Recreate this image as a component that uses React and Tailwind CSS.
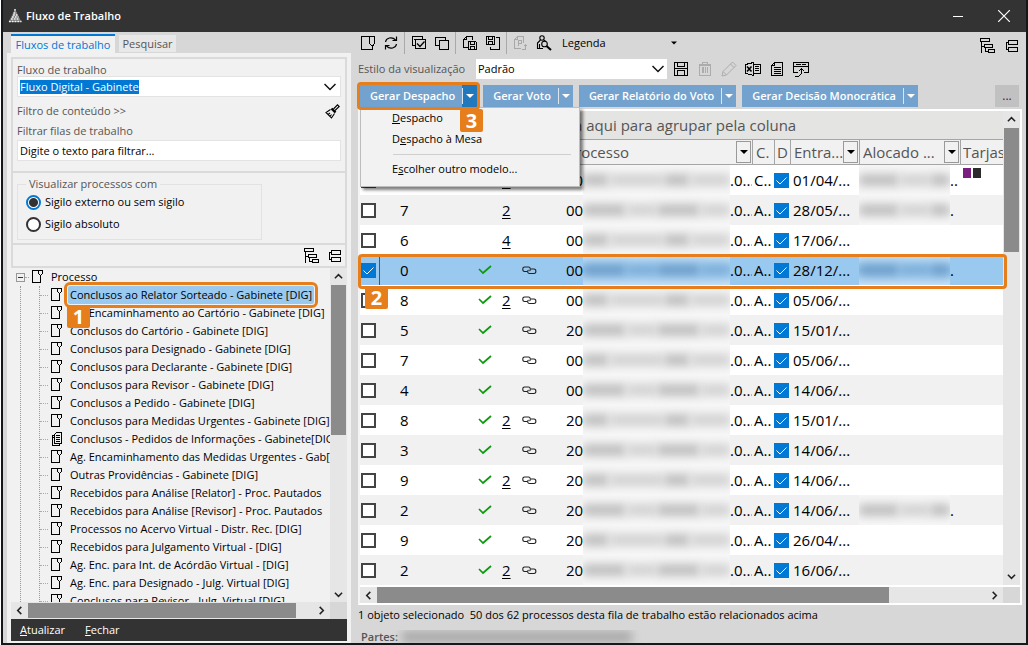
import React, { useState } from "react";
import clsx from "clsx";

const queues = [
  "Conclusos ao Relator Sorteado - Gabinete [DIG]",
  "Ag. Encaminhamento ao Cartório - Gabinete [DIG]",
  "Conclusos do Cartório - Gabinete [DIG]",
  "Conclusos para Designado - Gabinete [DIG]",
  "Conclusos para Declarante - Gabinete [DIG]",
  "Conclusos para Revisor - Gabinete [DIG]",
  "Conclusos a Pedido - Gabinete [DIG]",
  "Conclusos para Medidas Urgentes - Gabinete [DIG]",
  "Conclusos - Pedidos de Informações - Gabinete[DIG]",
  "Ag. Encaminhamento das Medidas Urgentes - Gab[DIG]",
  "Outras Providências - Gabinete [DIG]",
  "Recebidos para Análise [Relator] - Proc. Pautados",
  "Recebidos para Análise [Revisor] - Proc. Pautados",
  "Processos no Acervo Virtual - Distr. Rec. [DIG]",
  "Recebidos para Julgamento Virtual - [DIG]",
  "Ag. Enc. para Int. de Acórdão Virtual - [DIG]",
  "Ag. Enc. para Designado - Julg. Virtual [DIG]",
  "Conclusos para Revisor - Julg. Virtual [DIG]",
];

const processes = [
  { num: "", ok: false, count: "2", link: false, prefix: "00", cls: "C..", date: "01/04/...", owner: "..", tags: true },
  { num: "7", ok: false, count: "2", link: false, prefix: "00", cls: "A..", date: "28/05/...", owner: "." },
  { num: "6", ok: false, count: "4", link: false, prefix: "00", cls: "A..", date: "17/06/..." },
  { num: "0", ok: true, count: "", link: true, prefix: "00", cls: "A..", date: "28/12/...", owner: "." },
  { num: "8", ok: true, count: "2", link: true, prefix: "00", cls: "A..", date: "05/06/..." },
  { num: "5", ok: true, count: "", link: true, prefix: "20", cls: "A..", date: "15/01/..." },
  { num: "7", ok: true, count: "", link: true, prefix: "00", cls: "A..", date: "05/06/..." },
  { num: "4", ok: true, count: "", link: true, prefix: "00", cls: "A..", date: "14/06/..." },
  { num: "8", ok: true, count: "2", link: true, prefix: "20", cls: "A..", date: "15/01/..." },
  { num: "3", ok: true, count: "", link: true, prefix: "20", cls: "A..", date: "14/06/..." },
  { num: "9", ok: true, count: "2", link: true, prefix: "20", cls: "A..", date: "14/06/..." },
  { num: "2", ok: true, count: "", link: true, prefix: "20", cls: "A..", date: "14/06/...", owner: "." },
  { num: "9", ok: true, count: "", link: true, prefix: "20", cls: "A..", date: "26/04/..." },
  { num: "2", ok: true, count: "2", link: true, prefix: "20", cls: "A..", date: "16/06/..." },
];

// Base for the small line icons
const Icon = ({ children, className, w = 16, h = 16 }) => (
  <svg
    width={w}
    height={h}
    viewBox={`0 0 ${w} ${h}`}
    fill="none"
    stroke="currentColor"
    strokeWidth="1"
    shapeRendering="crispEdges"
    aria-hidden="true"
    className={clsx("shrink-0", className)}
  >
    {children}
  </svg>
);

const LogoIcon = () => (
  <svg width="14" height="14" viewBox="0 0 14 14" className="shrink-0" aria-hidden="true">
    <path d="M7 0 L13.5 13 H0.5 Z" fill="#777" />
    <path
      d="M7 0 V3 M5.5 4 H8.5 M5 6 H9.5 M4 8 H10.5 M3 10 H11.5 M1 12.5 H13.5"
      stroke="#f8f8f8"
      strokeWidth="1.4"
      fill="none"
      strokeDasharray="1.8 1"
    />
  </svg>
);

const PageIcon = () => (
  <Icon w={12} h={14}>
    <path d="M.5 .5 H10.5 V3.5 L8.5 5.5 V12.5 H.5 Z M6.5 .5 V3.5 L8.5 5.5" strokeWidth="1.2" />
  </Icon>
);

const ToolPageIcon = () => (
  <Icon>
    <path d="M1.5 1.5 H14.5 V8.5 L12.5 11 V14.5 H1.5 Z M9.5 1.5 V8.5 L12 11" />
  </Icon>
);

const RefreshIcon = () => (
  <svg width="16" height="16" viewBox="0 0 16 16" fill="none" stroke="currentColor" strokeWidth="1.2" className="shrink-0" aria-hidden="true">
    <path d="M2.5 7 C3 3 9 1 12.5 5 M13.5 1.5 V5.5 H9.5 M13.5 9 C13 13 7 15 3.5 11 M2.5 14.5 V10.5 H6.5" />
  </svg>
);

const CheckAllIcon = () => (
  <Icon>
    <path d="M4.5 10.5 H1.5 V1.5 H11.5 V4.5 M4.5 4.5 H14.5 V13.5 H4.5 Z M3.5 4.5 L4.5 5.5" />
    <path d="M6 8.5 L9 11.5 L13.5 6.5" strokeWidth="1.3" shapeRendering="auto" />
  </Icon>
);

const CopyIcon = () => (
  <Icon>
    <path d="M5.5 10.5 H1.5 V2.5 H11.5 V5.5 M5.5 5.5 H14.5 V14.5 H5.5 Z" />
  </Icon>
);

const PageSaveIcon = () => (
  <Icon>
    <path d="M6 12.5 H1.5 V4.5 L4.5 1.5 H10.5 V5 M1.5 4.5 H4.5 V1.5 M6.5 6.5 H13.5 L14.5 7.5 V14.5 H6.5 Z M8.5 6.5 V9.5 H12.5 V6.5 M8.5 14.5 V11.5 H12.5 V14.5" />
  </Icon>
);

const SavePageIcon = () => (
  <Icon>
    <path d="M1.5 1.5 H9.5 V9.5 H1.5 Z M3.5 1.5 V4.5 H7.5 V1.5 M3.5 9.5 V6.5 H7.5 V9.5 M11 2.5 H14.5 V14.5 H5.5 V11.5" />
  </Icon>
);

const PageExportIcon = () => (
  <Icon className="text-[#a8a8a8]">
    <path d="M8 13.5 H1.5 V4.5 L4.5 1.5 H10.5 V8 M1.5 4.5 H4.5 V1.5 M5.5 11 V5.5 H8.5 V8.5 H5.5 M9 14.5 H12.5 V9.5 M10.5 11.5 L12.5 9.5 L14.5 11.5" />
  </Icon>
);

const PersonSearchIcon = () => (
  <svg width="16" height="16" viewBox="0 0 16 16" fill="none" stroke="currentColor" strokeWidth="1.1" className="shrink-0" aria-hidden="true">
    <circle cx="6" cy="3" r="2.2" />
    <path d="M4.5 5 L1.5 8 V13.5 H7 M3.5 9 V13 M7.5 5 L10 6.5" />
    <circle cx="8.5" cy="9" r="2.8" />
    <path d="M10.5 11 L15 15" strokeWidth="2" />
  </svg>
);

const ExpandTreeIcon = () => (
  <Icon w={17} h={17}>
    <path d="M1.5 1.5 H10.5 V4.5 H1.5 Z M5.5 7.5 H13.5 V10.5 H5.5 Z M9.5 12.5 H15.5 V15.5 H9.5 Z M2.5 4.5 V15.5 M2.5 9.5 H5 M6.5 10.5 V14.5 H9" />
  </Icon>
);

const CollapseTreeIcon = () => (
  <Icon w={14} h={17}>
    <path d="M3.5 3.5 H12.5 V7.5 H3.5 Z M3.5 10.5 H12.5 V14.5 H3.5 Z M3 5.5 H1.5 V12.5 H3" />
  </Icon>
);

const SaveIcon = () => (
  <Icon>
    <path d="M1.5 1.5 H14.5 V14.5 H1.5 Z M4.5 1.5 V5.5 H11.5 V1.5 M4.5 14.5 V9.5 H11.5 V14.5 M2 7.5 H14" />
  </Icon>
);

const TrashIcon = () => (
  <Icon className="text-[#acacac]">
    <path d="M2.5 3.5 H13.5 V14.5 H2.5 Z M5.5 3 V1.5 H10.5 V3 M5.5 6 V12 M8 6 V12 M10.5 6 V12" />
    <path d="M2 4.5 H14 M6.5 6 V12" />
  </Icon>
);

const PencilIcon = () => (
  <Icon className="text-[#acacac]">
    <path d="M1 15 L2 10.5 L11.5 1 L15 4.5 L5.5 14 Z M2 10.5 L5.5 14 M9.5 3 L13 6.5" shapeRendering="auto" />
  </Icon>
);

const ExcelIcon = () => (
  <Icon>
    <path d="M.5 3.5 L8.5 1.5 V14.5 L.5 12.5 Z M9 3.5 H15.5 V12.5 H9 M10 5.5 H14 M10 7.5 H14 M10 9.5 H14" />
    <path d="M2 5.5 L6.5 10.5 M6.5 5.5 L2 10.5" strokeWidth="1.6" shapeRendering="auto" />
  </Icon>
);

const DocIcon = () => (
  <Icon>
    <path d="M5.5 1.5 H13.5 V14.5 H2.5 V4.5 Z M2.5 4.5 H5.5 V1.5 M5 6.5 H12 M5 8.5 H12 M5 10.5 H12 M5 12.5 H12" />
  </Icon>
);

const WindowImportIcon = () => (
  <Icon>
    <path d="M5 11.5 H.5 V1.5 H15.5 V11.5 H11 M3 3.5 H8 M9 3.5 H13 M1 5.5 H15 M2 15.5 H5.5 L8.5 12.5 V8 M6 10 L8.5 7.5 L11 10" />
  </Icon>
);

const BrushIcon = () => (
  <svg width="15" height="15" viewBox="0 0 15 15" fill="none" stroke="#000" strokeWidth="1.1" className="shrink-0" aria-hidden="true">
    <path d="M8.5 5 L12.5 .8 L14.2 2.5 L10 6.5" />
    <path d="M6.5 4.5 L10.5 8.5" strokeWidth="2.4" />
    <path d="M5.5 5.5 L1 8.5 L6.5 14 L9.5 9.5 M3 10.5 L5 9 M5 12.5 L6.5 10.5" />
  </svg>
);

const PagesIcon = () => (
  <Icon w={12} h={14}>
    <path d="M3.5 2.5 L5.5 .5 H10.5 V11.5 H3.5 Z M5 3.5 H9 M5 5.5 H9 M5 7.5 H9 M5 9.5 H9 M3 3.5 H1.5 V13.5 H8.5 V12 M1 5.5 H3" strokeWidth="1.2" />
  </Icon>
);

const LinkIcon = () => (
  <svg width="15" height="9" viewBox="0 0 15 9" fill="none" stroke="#222" strokeWidth="1.1" className="inline-block align-middle" aria-hidden="true">
    <path d="M5.5 5.5 H2.5 C.2 5.5 .2 1 2.5 1 H6.5 C8.5 1 9 4 7.5 5" />
    <path d="M9 3 H12 C14.5 3 14.5 7.5 12 7.5 H7.5 C5.5 7.5 5 5 6.5 4" />
  </svg>
);

const Chevron = ({ dir = "down", size = 9 }) => {
  const paths = {
    down: "M1 3 L5 7 L9 3",
    up: "M1 7 L5 3 L9 7",
    left: "M7 1 L3 5 L7 9",
    right: "M3 1 L7 5 L3 9",
  };
  return (
    <svg width={size} height={size} viewBox="0 0 10 10" fill="none" stroke="#222" strokeWidth="1.7" className="shrink-0" aria-hidden="true">
      <path d={paths[dir]} />
    </svg>
  );
};

const SelectChevron = () => (
  <svg width="12" height="8" viewBox="0 0 12 8" fill="none" stroke="#111" strokeWidth="1.5" className="pointer-events-none shrink-0" aria-hidden="true">
    <path d="M.5 1 L6 6.5 L11.5 1" />
  </svg>
);

const Caret = ({ className }) => (
  <svg width="8" height="4" viewBox="0 0 8 4" fill="currentColor" className={clsx("shrink-0", className)} aria-hidden="true">
    <path d="M0 0 H8 L4 4 Z" />
  </svg>
);

// Square check box with a thin white tick
const Tick = ({ label, checked, onChange }) => (
  <span className="relative block size-[15px]">
    <input
      type="checkbox"
      aria-label={label}
      checked={checked}
      onChange={onChange}
      className="block size-[15px] shrink-0 appearance-none border-2 border-[#444] bg-white checked:border-[#0078d4] checked:bg-[#0078d4]"
    />
    {checked && (
      <svg width="15" height="15" viewBox="0 0 15 15" fill="none" stroke="#fff" strokeWidth="1" className="pointer-events-none absolute inset-0" aria-hidden="true">
        <path d="M2.5 7.5 L6 11 L12.5 4.5" />
      </svg>
    )}
  </span>
);

const Badge = ({ n, className }) => (
  <span
    className={clsx(
      "pointer-events-none absolute z-30 flex size-[23px] items-center justify-center rounded-xs bg-[#e67e1b] text-xl leading-none font-bold text-white",
      className
    )}
  >
    {n}
  </span>
);

const IconButton = ({ label, children }) => (
  <button type="button" aria-label={label} className="flex shrink-0 items-center justify-center">
    {children}
  </button>
);

// Blurred-out personal data
const Redacted = ({ blocks, selected, className }) => (
  <span
    className={clsx(
      "flex h-[30px] items-center gap-px overflow-hidden bg-linear-to-b",
      selected
        ? "from-[#c4dff5] via-[#9ac9f0] to-[#c4dff5]"
        : "from-[#f7f7f7] via-[#f4f4f4] to-[#f7f7f7]",
      className
    )}
  >
    {blocks.map((b, i) => (
      <span
        key={i}
        style={{ flexGrow: b }}
        className={clsx(
          "h-3 blur-[5px]",
          selected
            ? i % 2 ? "bg-[#7fafd9]" : "bg-[#6f9fca]"
            : i % 2 ? "bg-[#d2d2d2]" : "bg-[#bfbfbf]"
        )}
      />
    ))}
  </span>
);

const SplitButton = ({ label, active, children }) => (
  <div className="relative flex h-[22px] shrink-0 items-stretch">
    <button type="button" className="bg-[#74a2ce] pr-[7px] pl-[10px] text-[11px] font-semibold text-white">
      {label}
    </button>
    <button
      type="button"
      aria-label={"Opções de " + label}
      className={clsx(
        "flex w-[15px] items-center text-white",
        active ? "bg-[#2278bd]" : "bg-[#74a2ce]"
      )}
    >
      <span className="mr-[3px] h-4 w-px bg-[#dce6ef]" />
      <Caret />
    </button>
    {children}
  </div>
);

const Sidebar = () => {
  const [secrecy, setSecrecy] = useState("externo");
  const radio =
    "size-[15px] shrink-0 appearance-none rounded-full border-2 border-[#333] bg-white checked:border-[#0078d4] checked:bg-[radial-gradient(circle,#333_0_4px,#fff_5px)]";

  return (
    <aside className="flex min-h-0 w-[344px] shrink-0 flex-col bg-[#f1f1f1]">
      {/* Tabs */}
      <div className="flex h-[21px] shrink-0 items-end gap-1 bg-[#d7d7d7] pl-1 text-[11px]">
        <button type="button" className="h-[19px] w-[104px] border-t-2 border-[#0078d4] bg-[#f1f1f1] leading-4 whitespace-nowrap text-[#0078d4]">
          Fluxos de trabalho
        </button>
        <button type="button" className="mb-px h-[17px] w-[57px] bg-[#e8e8e8] leading-4 text-[#555]">
          Pesquisar
        </button>
      </div>

      <div className="mx-1 mt-1 border-2 border-[#dadada] px-1 pt-[3px] pb-[10px] text-[11px] text-[#555]">
        <label htmlFor="flow" className="block h-[14px] leading-4">
          Fluxo de trabalho
        </label>
        <div className="flex h-[21px] items-center justify-between border border-[#e3e3e3] bg-white pr-1 pl-[2px]">
          <select id="flow" className="h-[14px] appearance-none bg-[#0078d4] leading-[14px] text-white">
            <option>Fluxo Digital - Gabinete</option>
          </select>
          <SelectChevron />
        </div>
        <div className="mt-[2px] flex h-6 items-center justify-between pr-px">
          <button type="button">Filtro de conteúdo &gt;&gt;</button>
          <IconButton label="Limpar filtro">
            <BrushIcon />
          </IconButton>
        </div>
        <label htmlFor="queue-filter" className="block h-[17px] leading-4">
          Filtrar filas de trabalho
        </label>
        <input
          id="queue-filter"
          type="text"
          defaultValue="Digite o texto para filtrar..."
          className="block h-[21px] w-full border border-[#e3e3e3] bg-white px-[2px] text-[11px] text-black"
        />
      </div>

      <div className="mx-1 border-x-2 border-b-2 border-[#dadada] px-1 pt-1 pb-[3px] text-[11px]">
        <fieldset className="w-[245px] border border-[#e2e2e2] px-2 pb-1">
          <legend className="px-[3px] leading-[14px] text-[#555]">Visualizar processos com</legend>
          <label className="flex h-[22px] items-center gap-1">
            <input
              type="radio"
              name="secrecy"
              checked={secrecy === "externo"}
              onChange={() => setSecrecy("externo")}
              className={radio}
            />
            Sigilo externo ou sem sigilo
          </label>
          <label className="flex h-[22px] items-center gap-1">
            <input
              type="radio"
              name="secrecy"
              checked={secrecy === "absoluto"}
              onChange={() => setSecrecy("absoluto")}
              className={radio}
            />
            Sigilo absoluto
          </label>
        </fieldset>
      </div>

      <div className="mx-1 flex h-[23px] shrink-0 items-center justify-end gap-2 border-x-2 border-b-2 border-[#dadada] pr-[3px]">
        <IconButton label="Expandir tudo">
          <ExpandTreeIcon />
        </IconButton>
        <IconButton label="Recolher tudo">
          <CollapseTreeIcon />
        </IconButton>
      </div>

      {/* Queue tree */}
      <div className="mx-1 flex min-h-0 flex-1">
        <div className="min-w-0 flex-1 overflow-hidden pl-[5px] text-[11px] whitespace-nowrap">
          <div className="flex h-[18px] items-center">
            <button type="button" aria-label="Recolher Processo" className="flex size-[9px] items-center justify-center border border-[#999]">
              <span className="h-px w-[5px] bg-[#333]" />
            </button>
            <span className="mr-[3px] w-1 border-t border-dotted border-[#aaa]" />
            <PageIcon />
            <span className="ml-[7px]">Processo</span>
          </div>
          <div className="ml-1 border-l border-dotted border-[#999] pl-[18px]">
            <ul className="border-l border-dotted border-[#999]">
              {queues.map((q, i) => (
                <li key={q} className="relative flex h-[18px] items-center">
                  <span className="mr-[3px] w-2 shrink-0 border-t border-dotted border-[#aaa]" />
                  {i === 8 ? <PagesIcon /> : <PageIcon />}
                  <button
                    type="button"
                    className={clsx(
                      "ml-[5px] h-[18px] px-[2px] leading-[18px]",
                      i === 0 && "rounded-xs bg-[#9ac9f0] outline-3 outline-offset-1 outline-[#e67e1b]"
                    )}
                  >
                    {q}
                  </button>
                  {i === 0 && <Badge n="1" className="top-[19px] left-[27px]" />}
                </li>
              ))}
            </ul>
          </div>
        </div>
        <div className="flex w-[17px] shrink-0 flex-col items-center bg-[#e6e6e6]">
          <span className="flex h-[17px] items-center">
            <Chevron dir="up" />
          </span>
          <span className="h-[150px] w-[15px] bg-[#8b8b8b]" />
          <span className="mt-auto flex h-4 items-center">
            <Chevron />
          </span>
        </div>
      </div>
      <div className="mx-1 flex h-[17px] shrink-0 bg-[#e6e6e6]">
        <span className="flex w-[17px] items-center justify-center">
          <Chevron dir="left" />
        </span>
        <span className="flex flex-1">
          <span className="my-px w-[94%] bg-[#8b8b8b]" />
        </span>
        <span className="flex w-[17px] items-center justify-center">
          <Chevron dir="right" />
        </span>
        <span className="w-[17px] bg-[#d7d7d7]" />
      </div>

      <div className="mx-1 mb-[2px] flex h-[22px] shrink-0 items-center gap-5 bg-[#333] px-[9px] text-[11px] font-medium text-white">
        <button type="button">
          <u>A</u>tualizar
        </button>
        <button type="button">
          <u>F</u>echar
        </button>
      </div>
    </aside>
  );
};

const GenerateMenu = () => (
  <div className="absolute top-[22px] left-0 z-10 w-[220px] border border-[#bdbdbd] bg-[#f2f2f2] text-[11px] text-black shadow-[3px_3px_3px_rgba(0,0,0,0.5)]">
    <button type="button" className="block h-[21px] w-full pl-[31px] text-left">
      <u>D</u>espacho
    </button>
    <button type="button" className="block h-[21px] w-full pl-[31px] text-left">
      D<u>e</u>spacho à Mesa
    </button>
    <hr className="mt-1 mr-2 mb-1 ml-8 border-[#cfcfcf]" />
    <button type="button" className="mb-[6px] block h-[21px] w-full pl-[31px] text-left">
      E<u>s</u>colher outro modelo...
    </button>
  </div>
);

const Th = ({ children, filter, className }) => (
  <th scope="col" className={clsx("border-y border-[#a5a5a5] p-0 font-normal", className)}>
    <span className="flex h-[24px] items-center justify-between overflow-hidden">
      {children}
      {filter && (
        <button type="button" aria-label="Filtrar" className="mr-px flex h-[22px] w-[15px] shrink-0 items-center justify-center border border-[#999] text-black">
          <Caret />
        </button>
      )}
    </span>
  </th>
);

const ProcessTable = () => {
  const [selected, setSelected] = useState([3]);

  const toggle = (i) => {
    setSelected((prev) =>
      prev.includes(i) ? prev.filter((x) => x !== i) : [...prev, i]
    );
  };

  return (
    <table className="w-full table-fixed border-separate border-spacing-0 text-left text-[15px] whitespace-nowrap">
      <colgroup>
        <col className="w-[40px]" />
        <col className="w-[74px]" />
        <col className="w-[24px]" />
        <col className="w-[20px]" />
        <col className="w-[48px]" />
        <col />
        <col className="w-[22px]" />
        <col className="w-[16px]" />
        <col className="w-[69px]" />
        <col className="w-[101px]" />
        <col className="w-[43px]" />
      </colgroup>
      <thead className="bg-[#f1f1f1] text-[#555]">
        <tr>
          <Th />
          <Th />
          <Th />
          <Th />
          <Th />
          <Th filter>Processo</Th>
          <Th className="border-l pl-[3px]">C.</Th>
          <Th className="border-l pl-[2px]">D</Th>
          <Th filter className="border-l pl-[3px]">Entra...</Th>
          <Th filter className="border-l pl-[3px]">Alocado ...</Th>
          <Th className="border-l pl-[2px]">Tarjas</Th>
        </tr>
      </thead>
      <tbody>
        {processes.map((p, i) => {
          const isSelected = selected.includes(i);
          return (
            <tr
              key={i}
              className={clsx(
                "relative h-[30px] [&>td]:p-0",
                isSelected ? "bg-[#9ac9f0]" : i % 2 ? "bg-[#f1f1f1]" : "bg-white"
              )}
            >
              <td>
                <span
                  className={clsx(
                    "flex h-[30px] w-5 items-center pl-px",
                    i === 3 && "border-r border-[#7a4a20]"
                  )}
                >
                  <Tick label="Selecionar processo" checked={isSelected} onChange={() => toggle(i)} />
                </span>
                {i === 3 && (
                  <>
                    <span className="pointer-events-none absolute -top-[1px] -right-1 -bottom-1 -left-[2px] z-20 rounded-sm border-3 border-[#e67e1b]" />
                    <Badge n="2" className="top-[31px] left-[5px]" />
                  </>
                )}
              </td>
              <td>{p.num}</td>
              <td>
                {p.ok && (
                  <svg width="14" height="10" viewBox="0 0 14 10" fill="none" stroke="#0b9a0b" strokeWidth="1.7" className="ml-1 block" aria-hidden="true">
                    <path d="M1 4 L5 8 L13 1" />
                  </svg>
                )}
              </td>
              <td>
                {p.count && (
                  <a href="#related" className="ml-1 underline underline-offset-2">
                    {p.count}
                  </a>
                )}
              </td>
              <td>
                <span className="flex justify-start pl-1">{p.link && <LinkIcon />}</span>
              </td>
              <td>
                <span className="flex items-center overflow-hidden">
                  {p.prefix}
                  <Redacted
                    selected={isSelected}
                    blocks={i % 2 ? [3, 2, 3, 2] : [2, 4, 2, 3]}
                    className="flex-1"
                  />
                  <span className="w-[22px]">.0...</span>
                </span>
              </td>
              <td className="pl-[2px]!">{p.cls}</td>
              <td>
                <Tick label="Digital" checked onChange={() => {}} />
              </td>
              <td className="pl-[3px]!">{p.date}</td>
              <td>
                {p.owner && (
                  <span className="flex items-center">
                    <Redacted selected={isSelected} blocks={[4, 3, 2]} className="w-[91px]" />
                    {p.owner}
                  </span>
                )}
              </td>
              <td className="align-top">
                {p.tags && (
                  <span className="mt-[3px] flex gap-[2px] pl-[3px]">
                    <span className="h-[10px] w-2 bg-[#7a1f80]" />
                    <span className="h-[10px] w-2 bg-[#2b2b2b]" />
                  </span>
                )}
              </td>
            </tr>
          );
        })}
      </tbody>
    </table>
  );
};

const Separator = () => <span className="mr-[6px] ml-[5px] h-[22px] w-px bg-[#a9a9a9]" />;

const App = () => {
  return (
    <div className="h-screen min-h-[645px] bg-white pl-px font-['Open_Sans','Noto_Sans',sans-serif] text-black">
      <div className="flex h-full flex-col border-x-2 border-b-2 border-[#14181a] bg-[#d7d7d7]">
        {/* Title bar */}
        <header className="flex h-8 shrink-0 items-center bg-[#333] pr-4 pl-[5px] text-white">
          <LogoIcon />
          <h1 className="ml-1 flex-1 text-[11px] font-semibold">Fluxo de Trabalho</h1>
          <button type="button" aria-label="Minimizar" className="mr-[35px] h-px w-[10px] bg-white" />
          <button type="button" aria-label="Fechar janela">
            <svg width="12" height="12" viewBox="0 0 12 12" stroke="#fff" strokeWidth="1.2" aria-hidden="true">
              <path d="M0 0 L12 12 M12 0 L0 12" />
            </svg>
          </button>
        </header>

        <div className="flex min-h-0 flex-1 pl-1">
          <Sidebar />

          <main className="flex min-w-0 flex-1 flex-col pr-1 pl-[7px]">
            {/* Main toolbar */}
            <div className="flex h-[22px] items-center pl-[2px]">
              <div className="flex gap-[7px]">
                <IconButton label="Abrir"><ToolPageIcon /></IconButton>
                <IconButton label="Atualizar lista"><RefreshIcon /></IconButton>
              </div>
              <Separator />
              <div className="flex gap-[7px]">
                <IconButton label="Marcar todos"><CheckAllIcon /></IconButton>
                <IconButton label="Desmarcar todos"><CopyIcon /></IconButton>
              </div>
              <Separator />
              <div className="flex gap-[7px]">
                <IconButton label="Salvar documento"><PageSaveIcon /></IconButton>
                <IconButton label="Salvar em lote"><SavePageIcon /></IconButton>
              </div>
              <Separator />
              <div className="flex gap-[7px]">
                <IconButton label="Exportar"><PageExportIcon /></IconButton>
                <IconButton label="Consultar parte"><PersonSearchIcon /></IconButton>
              </div>
              <button type="button" className="ml-[10px] flex w-[115px] items-center justify-between text-[11px]">
                Legenda
                <Caret className="w-[6px]" />
              </button>
              <div className="ml-auto flex items-center gap-[9px] pt-1 pr-[3px]">
                <IconButton label="Expandir grupos"><ExpandTreeIcon /></IconButton>
                <IconButton label="Recolher grupos"><CollapseTreeIcon /></IconButton>
              </div>
            </div>

            {/* View style */}
            <div className="mt-[5px] flex h-5 items-center">
              <label htmlFor="view-style" className="w-[118px] text-[11px] whitespace-nowrap text-[#555]">
                Estilo da visualização
              </label>
              <div className="relative mr-[6px] flex h-5 w-[191px] items-center">
                <select id="view-style" className="h-5 w-full appearance-none bg-white px-[2px] text-[11px]">
                  <option>Padrão</option>
                </select>
                <span className="pointer-events-none absolute right-[3px]">
                  <SelectChevron />
                </span>
              </div>
              <div className="flex gap-2">
                <IconButton label="Salvar estilo"><SaveIcon /></IconButton>
                <IconButton label="Excluir estilo"><TrashIcon /></IconButton>
                <IconButton label="Editar estilo"><PencilIcon /></IconButton>
                <IconButton label="Exportar para Excel"><ExcelIcon /></IconButton>
                <IconButton label="Relatório"><DocIcon /></IconButton>
                <IconButton label="Importar"><WindowImportIcon /></IconButton>
              </div>
            </div>

            {/* Generate buttons */}
            <div className="mt-[6px] flex h-[22px] gap-[6px] pl-[2px]">
              <SplitButton label="Gerar Despacho" active>
                <GenerateMenu />
                <span className="pointer-events-none absolute -inset-[3px] z-20 rounded-sm border-3 border-[#e67e1b]" />
                <Badge n="3" className="top-6 left-[100px]" />
              </SplitButton>
              <SplitButton label="Gerar Voto" />
              <SplitButton label="Gerar Relatório do Voto" />
              <SplitButton label="Gerar Decisão Monocrática" />
              <button type="button" className="mr-[3px] ml-auto w-6 bg-[#c1c1c1] text-xs text-[#4a1050]">
                ...
              </button>
            </div>

            {/* Grid */}
            <div className="mt-[2px] border-2 border-white border-l-[#f4f4f4] bg-white">
              <div className="flex">
                <div className="min-w-0 flex-1">
                  <p className="h-7 bg-[#e4e4e2] pl-[214px] text-[15px] leading-7 text-[#555]">
                    a aqui para agrupar pela coluna
                  </p>
                  <ProcessTable />
                </div>
                <div className="flex w-[17px] shrink-0 flex-col items-center bg-[#e6e6e6]">
                  <span className="flex h-[17px] items-center">
                    <Chevron dir="up" />
                  </span>
                  <span className="h-[124px] w-[15px] bg-[#8b8b8b]" />
                  <span className="mt-auto flex h-[17px] items-center">
                    <Chevron />
                  </span>
                </div>
              </div>
              <div className="mt-[2px] flex h-4 bg-[#e6e6e6]">
                <span className="flex w-[17px] items-center justify-center">
                  <Chevron dir="left" />
                </span>
                <span className="flex flex-1">
                  <span className="w-[84%] bg-[#8b8b8b]" />
                </span>
                <span className="flex w-[17px] items-center justify-center">
                  <Chevron dir="right" />
                </span>
                <span className="w-[17px] bg-[#d7d7d7]" />
              </div>
            </div>

            {/* Status */}
            <p className="h-5 text-[11px] leading-5">
              1 objeto selecionado &nbsp;50 dos 62 processos desta fila de trabalho estão relacionados acima
            </p>
            <div className="mt-auto flex h-[13px] items-center overflow-hidden pl-[3px] text-[11px] leading-none font-semibold text-[#555]">
              Partes:
              <span className="ml-1 h-3 w-[230px] bg-[#a9a9a9] blur-[5px]" />
            </div>
          </main>
        </div>
      </div>
    </div>
  );
};

export default App;
